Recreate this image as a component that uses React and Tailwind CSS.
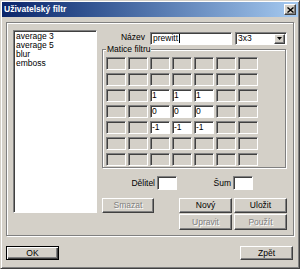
const sunken = 'border border-t-[#808080] border-l-[#808080] border-r-white border-b-white shadow-[inset_1px_1px_0_#404040]';
const raised = 'bg-[#d4d0c8] border border-t-white border-l-white border-r-[#404040] border-b-[#404040] shadow-[inset_-1px_-1px_0_#808080]';
const disabledText = 'text-[#808080] [text-shadow:1px_1px_0_#fff]';

const filters = ['average 3', 'average 5', 'blur', 'emboss'];

const matrix = [
  [null, null, null, null, null, null, null],
  [null, null, null, null, null, null, null],
  [null, null, '1', '1', '1', null, null],
  [null, null, '0', '0', '0', null, null],
  [null, null, '-1', '-1', '-1', null, null],
  [null, null, null, null, null, null, null],
  [null, null, null, null, null, null, null],
];

function Button({ children, disabled, className = '' }) {
  return (
    <div className={`${raised} flex items-center justify-center ${disabled ? disabledText : 'text-black'} ${className}`}>
      {children}
    </div>
  );
}

function CloseButton() {
  return (
    <div className={`${raised} w-[12px] h-[11px] flex items-center justify-center mr-[2px]`}>
      <svg width="7" height="6" viewBox="0 0 7 6">
        <path d="M0.5 0.5 L6.5 5.5 M6.5 0.5 L0.5 5.5" stroke="#000" strokeWidth="1.4" />
      </svg>
    </div>
  );
}

export default function App() {
  return (
    <div
      className="w-[300px] h-[269px] box-border bg-[#d4d0c8] border border-t-[#d4d0c8] border-l-[#d4d0c8] border-r-[#404040] border-b-[#404040] shadow-[inset_1px_1px_0_#fff,inset_-1px_-1px_0_#808080] p-[1px] flex flex-col text-[8.5px] leading-none"
      style={{ fontFamily: '"Liberation Sans", Arial, sans-serif' }}
    >
      {/* title bar */}
      <div className="h-[15px] flex items-center justify-between bg-gradient-to-r from-[#0a246a] to-[#a6caf0]">
        <span className="pl-[2px] text-white font-bold text-[8.5px]">Uživatelský filtr</span>
        <CloseButton />
      </div>

      {/* main etched frame */}
      <div className="ml-[4px] mt-[5px] w-[288px] h-[214px] border border-[#808080] shadow-[inset_1px_1px_0_#fff,1px_1px_0_#fff] flex pl-[6px] pt-[7px]">
        {/* filter list */}
        <div className={`w-[84px] h-[183px] bg-white ${sunken} pl-[2px] pt-[1px]`}>
          {filters.map(f => (
            <div key={f} className="leading-[9px] h-[9px]">{f}</div>
          ))}
        </div>

        {/* right column */}
        <div className="ml-[4px] w-[186px] flex flex-col">
          <div className="mt-[2px] h-[13px] flex items-center">
            <span className="w-[44px] text-right -mt-[3px]">Název</span>
            <div className={`ml-[5px] w-[82px] h-[13px] bg-white ${sunken} flex items-center pl-[2px]`}>
              prewitt<span className="w-[1px] h-[9px] bg-black ml-[1px]" />
            </div>
            <div className={`ml-[3px] w-[52px] h-[13px] bg-white ${sunken} flex items-center justify-between pl-[2px] pr-[1px]`}>
              <span>3x3</span>
              <div className={`${raised} w-[11px] h-[10px] flex items-center justify-center`}>
                <svg width="5" height="3" viewBox="0 0 5 3">
                  <path d="M0 0 H5 L2.5 3 Z" fill="#000" />
                </svg>
              </div>
            </div>
          </div>

          {/* matrix group */}
          <div className="relative ml-[1px] mt-[4px] w-[184px] h-[119px] border border-[#808080] shadow-[inset_1px_1px_0_#fff,1px_1px_0_#fff] pl-[3px] pt-[7px]">
            <span className="absolute -top-[5px] left-[3px] px-[1px] bg-[#d4d0c8]">Matice filtru</span>
            <div className="grid grid-cols-[repeat(7,20px)] gap-x-[2px] gap-y-[3px]">
              {matrix.flat().map((v, i) => (
                <div
                  key={i}
                  className={`h-[13px] ${sunken} ${v === null ? 'bg-[#d4d0c8]' : 'bg-white'} flex items-center pl-[1px]`}
                >
                  {v}
                </div>
              ))}
            </div>
          </div>

          {/* divisor / noise */}
          <div className="mt-[8px] h-[14px] flex items-center">
            <span className="w-[54px] text-right">Dělitel</span>
            <div className={`ml-[2px] w-[20px] h-[14px] bg-white ${sunken}`} />
            <span className="w-[54px] text-right">Šum</span>
            <div className={`ml-[2px] w-[20px] h-[14px] bg-white ${sunken}`} />
          </div>

          {/* buttons */}
          <div className="mt-[8px] flex items-start">
            <Button disabled className="ml-[1px] w-[52px] h-[15px]">Smazat</Button>
            <div className="ml-[25px] grid grid-cols-[53px_53px] gap-x-[2px] gap-y-[1px]">
              <Button className="h-[15px]">Nový</Button>
              <Button className="h-[15px]">Uložit</Button>
              <Button disabled className="h-[16px]">Upravit</Button>
              <Button disabled className="h-[16px]">Použít</Button>
            </div>
          </div>
        </div>
      </div>

      {/* dialog buttons */}
      <div className="mt-[10px] px-[4px] flex justify-between">
        <div className="w-[53px] h-[14px] bg-[#d4d0c8] border border-black shadow-[inset_1px_1px_0_#fff,inset_-1px_-1px_0_#404040,inset_-2px_-2px_0_#808080] flex items-center justify-center">
          OK
        </div>
        <Button className="w-[53px] h-[14px] mr-[1px]">Zpět</Button>
      </div>
    </div>
  );
}
